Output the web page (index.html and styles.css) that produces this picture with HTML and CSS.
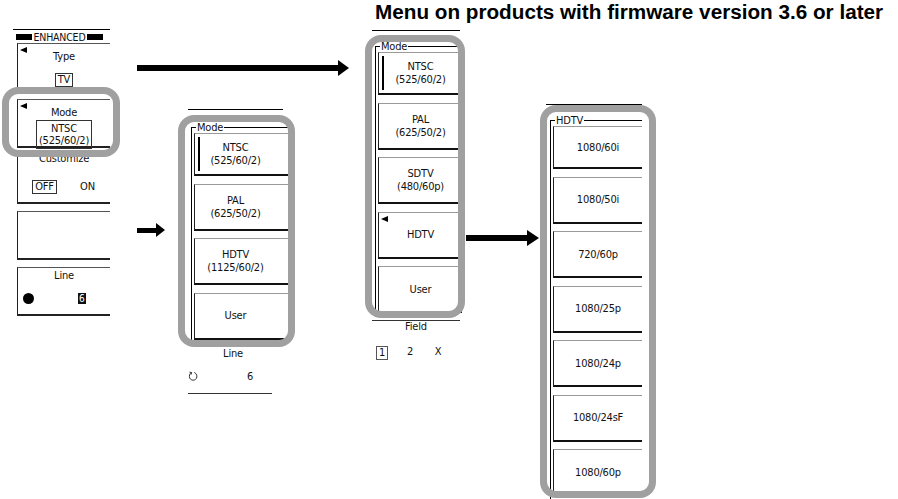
FILE: index.html
```html
<!DOCTYPE html>
<html lang="en">
<head>
  <meta charset="UTF-8">
  <title>Video trigger mode menus</title>
<link rel="stylesheet" href="styles.css">
</head>
<body>
<div class="canvas">
  <h1 class="title">Menu on products with firmware version 3.6 or later</h1>

  <!-- soft key column of the ENHANCED trigger menu -->
  <div class="softkeys">
    <div class="hdr"><span class="blk"></span>ENHANCED<span class="blk"></span></div>
    <div class="key">
      <span class="tri"></span>
      <div class="lbl">Type</div>
      <div class="val"><span class="boxed">TV</span></div>
    </div>
    <div class="key mode">
      <span class="tri"></span>
      <div class="lbl">Mode</div>
      <div class="val"><span class="boxed two">NTSC<br>(525/60/2)</span></div>
    </div>
    <div class="key cust">
      <div class="lbl">Customize</div>
      <div class="val split"><span class="boxed">OFF</span><span>ON</span></div>
    </div>
    <div class="key"></div>
    <div class="key line">
      <div class="lbl">Line</div>
      <div class="val dial"><span class="dot"></span><span class="inv">6</span></div>
    </div>
  </div>

  <!-- old Mode list -->
  <div class="menu menu-mode">
    <fieldset>
      <legend>Mode</legend>
      <div class="item sel">NTSC<br>(525/60/2)</div>
      <div class="item">PAL<br>(625/50/2)</div>
      <div class="item">HDTV<br>(1125/60/2)</div>
      <div class="item">User</div>
    </fieldset>
    <div class="foot">
      <div class="lbl">Line</div>
      <div class="knob">
        <svg width="10" height="11" viewBox="0 0 10 11"><path d="M3.5 1.5C1.5 2.6 0.8 5 1.8 7.2C3 9.6 6.8 9.9 8.3 7.6C9.6 5.6 8.8 2.6 6.3 1.4" fill="none" stroke="#333"/><path d="M1.5 1.2L3.6 1.5L3.1 3.6" fill="none" stroke="#333"/></svg>
        <span class="num">6</span>
      </div>
    </div>
  </div>

  <!-- new Mode list -->
  <div class="menu menu-new">
    <fieldset>
      <legend>Mode</legend>
      <div class="item sel">NTSC<br>(525/60/2)</div>
      <div class="item">PAL<br>(625/50/2)</div>
      <div class="item">SDTV<br>(480/60p)</div>
      <div class="item"><span class="tri"></span>HDTV</div>
      <div class="item">User</div>
    </fieldset>
    <div class="field">
      <div class="lbl">Field</div>
      <div class="opts"><span class="boxed">1</span><span>2</span><span>X</span></div>
    </div>
  </div>

  <!-- HDTV sub menu -->
  <div class="menu menu-hd">
    <fieldset>
      <legend>HDTV</legend>
      <div class="item">1080/60i</div>
      <div class="item">1080/50i</div>
      <div class="item">720/60p</div>
      <div class="item">1080/25p</div>
      <div class="item">1080/24p</div>
      <div class="item">1080/24sF</div>
      <div class="item">1080/60p</div>
    </fieldset>
  </div>

  <!-- arrows -->
  <svg class="arrow arrow-top" width="212" height="16" viewBox="0 0 212 16"><rect x="0" y="5" width="202" height="6"/><polygon points="201,0 212,8 201,16"/></svg>
  <svg class="arrow arrow-side" width="28" height="14" viewBox="0 0 28 14"><rect x="0" y="5" width="20" height="5"/><polygon points="19,0 28,7 19,14"/></svg>
  <svg class="arrow arrow-hd" width="73" height="16" viewBox="0 0 73 16"><rect x="0" y="5" width="62" height="6"/><polygon points="61,0 73,8 61,16"/></svg>

  <!-- grey highlight frames -->
  <div class="ring ring-1"></div>
  <div class="ring ring-2"></div>
  <div class="ring ring-3"></div>
  <div class="ring ring-4"></div>
</div>
</body>
</html>
```

FILE: styles.css
```css
* {
  box-sizing: border-box;
  margin: 0;
}

body {
  margin: 0;
  background: #fff;
  color: #111;
  font-family: "DejaVu Sans Condensed", "DejaVu Sans", sans-serif;
  font-stretch: condensed;
  font-size: 11px;
  line-height: 12px;
  letter-spacing: -0.2px;
}

.canvas {
  position: relative;
  width: 898px;
  height: 499px;
  overflow: hidden;
}

.title {
  position: absolute;
  left: 375px;
  top: 1px;
  font: bold 20.7px/22px "Liberation Sans", Arial, sans-serif;
  font-stretch: normal;
  letter-spacing: 0;
  color: #000;
  white-space: nowrap;
}

/* soft keys */
.softkeys {
  position: absolute;
  left: 13px;
  top: 29px;
  width: 97px;
}

.hdr {
  height: 14px;
  border-top: 1px solid #000;
  display: flex;
  align-items: center;
  justify-content: center;
  gap: 2px;
  padding-right: 4px;
  font-size: 10.5px;
}

.blk {
  width: 16px;
  height: 6px;
  background: #000;
}

.key {
  position: relative;
  height: 49px;
  margin: 0 0 7px 4px;
  padding-top: 7px;
  border-top: 1px solid #555;
  border-left: 1px solid #222;
  border-bottom: 2px solid #222;
  display: flex;
  flex-direction: column;
  align-items: center;
}

.key.cust {
  padding-top: 0;
}

.key.cust .lbl {
  margin-top: -3px;
}

.key.line {
  padding-top: 2px;
}

.tri {
  position: absolute;
  left: 2px;
  top: 3px;
  border-top: 3px solid transparent;
  border-bottom: 3px solid transparent;
  border-right: 7px solid #000;
}

.val {
  flex: 1;
  align-self: stretch;
  display: flex;
  align-items: center;
  justify-content: center;
  padding-top: 6px;
}

.key.mode .val {
  align-items: flex-start;
  padding-top: 1px;
}

.boxed {
  border: 1px solid #333;
  padding: 0 2px;
  line-height: 12px;
}

.boxed.two {
  padding: 2px 2px 1px;
  line-height: 12px;
  text-align: center;
}

.val.split {
  display: grid;
  grid-template-columns: 43px 43px;
  justify-items: center;
  align-content: center;
  padding-left: 4px;
}

.val.dial {
  justify-content: flex-start;
  padding: 0 0 0 5px;
}

.dot {
  width: 11px;
  height: 11px;
  border-radius: 50%;
  background: #000;
}

.inv {
  margin-left: 44px;
  padding: 0 1px;
  background: #111;
  color: #fff;
  font-size: 10px;
  line-height: 11px;
}

/* menus */
.menu {
  position: absolute;
  border-top: 1px solid #000;
}

.menu fieldset {
  border: 0;
  border-top: 1px solid #000;
  border-left: 1px solid #000;
  margin: 10px 0 0 3px;
  padding: 0 0 4px 2px;
}

.menu legend {
  margin-left: 2px;
  padding: 0 1px;
  line-height: 11px;
}

.item {
  position: relative;
  height: 47px;
  margin-top: 7.5px;
  border-top: 1px solid #9a9a9a;
  border-left: 1px solid #222;
  border-bottom: 2px solid #111;
  display: flex;
  flex-direction: column;
  justify-content: center;
  align-items: center;
  text-align: center;
  line-height: 13px;
}

.item:first-of-type {
  height: 43px;
  margin-top: 0;
}

.item.sel::before {
  content: "";
  position: absolute;
  left: 3px;
  top: 3px;
  bottom: 3px;
  width: 2px;
  background: #000;
}

.menu-mode {
  left: 188px;
  top: 109px;
  width: 95px;
}

.menu-mode fieldset {
  margin-top: 12px;
}

.menu-mode .item {
  width: 96px;
  padding-right: 14px;
}

.menu-new {
  left: 372px;
  top: 30px;
  width: 88px;
}

.menu-new .item {
  width: 84px;
}

.menu-hd {
  left: 546px;
  top: 104px;
  width: 96px;
}

.menu-hd fieldset {
  margin-left: 4px;
}

.menu-hd .item {
  width: 89px;
}

.foot {
  width: 84px;
  margin-top: 4px;
}

.foot .lbl {
  padding-left: 6px;
  text-align: center;
}

.knob {
  display: flex;
  align-items: center;
  margin-top: 11px;
  padding-bottom: 10px;
  border-bottom: 1px solid #333;
}

.knob .num {
  margin-left: 49px;
}

.field {
  margin-top: 3px;
  border-top: 1px solid #333;
}

.field .lbl {
  text-align: center;
}

.opts {
  display: grid;
  grid-template-columns: repeat(3, 28px);
  justify-items: center;
  margin: 13px 0 0 -4px;
}

.opts .boxed {
  border-color: #555;
  padding: 0 2px;
}

/* arrows */
.arrow {
  position: absolute;
  fill: #000;
}

.arrow-top {
  left: 137px;
  top: 60px;
}

.arrow-side {
  left: 137px;
  top: 223px;
}

.arrow-hd {
  left: 466px;
  top: 230px;
}

/* grey highlight frames */
.ring {
  position: absolute;
  border: 7px solid #a0a0a0;
  border-radius: 16px;
}

.ring-1 {
  left: 2px;
  top: 87px;
  width: 118px;
  height: 70px;
}

.ring-2 {
  left: 178px;
  top: 115px;
  width: 117px;
  height: 232px;
}

.ring-3 {
  left: 365px;
  top: 35px;
  width: 100px;
  height: 283px;
}

.ring-4 {
  left: 540px;
  top: 105px;
  width: 116px;
  height: 393px;
}
```
